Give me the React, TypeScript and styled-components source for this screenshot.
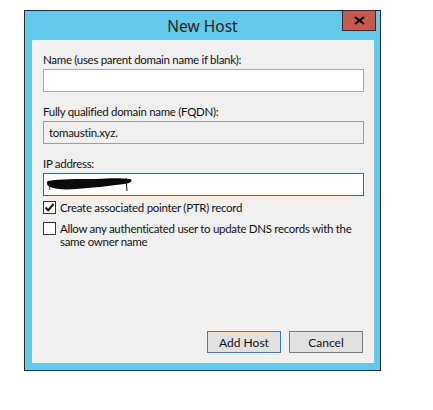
import React from "react";
import styled, { createGlobalStyle } from "styled-components";

const GlobalStyle = createGlobalStyle`
  body {
    margin: 0;
    background: #ffffff;
    font-family: Lato, "Noto Sans", sans-serif;
  }
`;

const Page = styled.div`
  width: 433px;
  height: 410px;
  padding: 10px 0 0 24px;
  box-sizing: border-box;
`;

const Window = styled.div`
  width: 357px;
  height: 361px;
  box-sizing: border-box;
  border: 1px solid #2b2b2b;
  background: #63c9ea;
  display: flex;
  flex-direction: column;
`;

const TitleBar = styled.div`
  height: 29px;
  display: flex;
  align-items: center;
  justify-content: center;
  position: relative;
`;

const Title = styled.span`
  font-family: "Noto Sans", sans-serif;
  font-size: 15.5px;
  color: #1e1e1e;
  margin-top: 1px;
`;

const CloseButton = styled.div`
  position: absolute;
  top: -1px;
  right: 4px;
  width: 34px;
  height: 21px;
  box-sizing: border-box;
  background: #c75a50;
  border: 1px solid #3c2a28;
  display: flex;
  align-items: center;
  justify-content: center;
`;

const Panel = styled.div`
  flex: 1;
  margin: 0 6px 7px 7px;
  background: #f0f0f0;
  padding: 12px 10px 10px 11px;
  display: flex;
  flex-direction: column;
  font-size: 11.5px;
  letter-spacing: -0.3px;
  color: #111;
`;

const Label = styled.div<{ gap?: number }>`
  line-height: 15px;
  white-space: nowrap;
  margin-top: ${(p) => p.gap ?? 0}px;
`;

const Field = styled.div<{ readOnly?: boolean; focused?: boolean }>`
  margin-top: 2px;
  height: 23px;
  box-sizing: border-box;
  border: 1px solid
    ${(p) => (p.focused ? "#2f6a9a" : p.readOnly ? "#9e9e9e" : "#a8a8a8")};
  background: ${(p) => (p.readOnly ? "#f0f0f0" : "#ffffff")};
  padding: 0 5px;
  display: flex;
  align-items: center;
`;

const CheckRow = styled.label<{ gap: number }>`
  margin-top: ${(p) => p.gap}px;
  display: flex;
  align-items: flex-start;
  gap: 4px;
  line-height: 13.5px;
  white-space: nowrap;
`;

const Box = styled.div`
  width: 13px;
  height: 13px;
  box-sizing: border-box;
  border: 1px solid #333;
  background: #fff;
  flex-shrink: 0;
  display: flex;
  align-items: center;
  justify-content: center;
`;

const Buttons = styled.div`
  margin-top: auto;
  display: flex;
  justify-content: flex-end;
  gap: 8px;
  padding-right: 1px;
`;

const Button = styled.button<{ primary?: boolean }>`
  width: 74px;
  height: 22px;
  box-sizing: border-box;
  background: #e1e1e1;
  border: 1px solid ${(p) => (p.primary ? "#3c7fb1" : "#7a7a7a")};
  font-family: inherit;
  font-size: 12px;
  color: #111;
  padding: 0;
`;

const Check = () => (
  <svg width="11" height="11" viewBox="0 0 11 11">
    <path d="M1.5 5.5 L4.2 8.3 L9.6 1.8" stroke="#111" strokeWidth="2" fill="none" />
  </svg>
);

const Scribble = () => (
  <svg width="90" height="16" viewBox="0 0 90 16" style={{ marginLeft: -3, marginTop: 1 }}>
    <path
      d="M2 4 C14 2 30 2 50 2 C64 1 76 1 84 2 C87 3 86 6 78 7 C62 9 46 11 30 12 C18 13 9 12 4 10 C1 9 0 5 2 4 Z"
      fill="#0a0a0a"
    />
    <path d="M80 1 L81 14" stroke="#0a0a0a" strokeWidth="1" />
    <path d="M3 8 L4 13" stroke="#3a4fa0" strokeWidth="1" />
  </svg>
);

export default function App() {
  return (
    <Page>
      <GlobalStyle />
      <Window>
        <TitleBar>
          <Title>New Host</Title>
          <CloseButton>
            <svg width="11" height="9" viewBox="0 0 11 9">
              <path d="M1 1 L10 8 M10 1 L1 8" stroke="#000" strokeWidth="2.2" />
            </svg>
          </CloseButton>
        </TitleBar>
        <Panel>
          <Label>Name (uses parent domain name if blank):</Label>
          <Field />
          <Label gap={12}>Fully qualified domain name (FQDN):</Label>
          <Field readOnly>tomaustin.xyz.</Field>
          <Label gap={12}>IP address:</Label>
          <Field focused>
            <Scribble />
          </Field>
          <CheckRow gap={5}>
            <Box>
              <Check />
            </Box>
            Create associated pointer (PTR) record
          </CheckRow>
          <CheckRow gap={7}>
            <Box />
            <span>
              Allow any authenticated user to update DNS records with the
              <br />
              same owner name
            </span>
          </CheckRow>
          <Buttons>
            <Button primary>Add Host</Button>
            <Button>Cancel</Button>
          </Buttons>
        </Panel>
      </Window>
    </Page>
  );
}
